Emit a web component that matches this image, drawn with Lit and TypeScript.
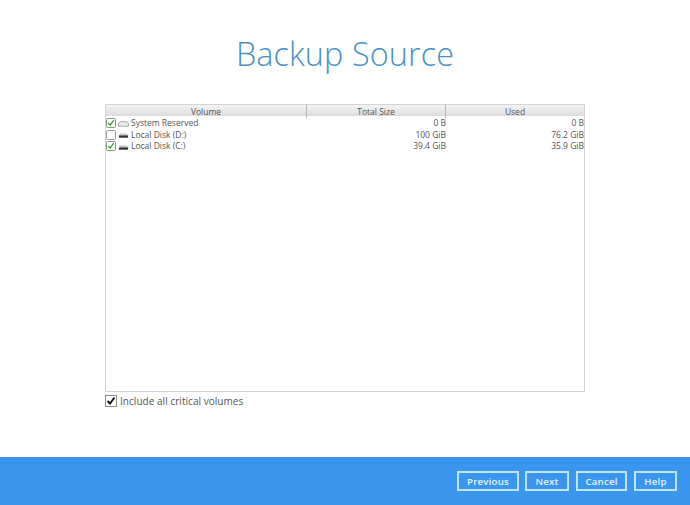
import { LitElement, html, css, svg } from "lit";
import { customElement } from "lit/decorators.js";

const rows = [
  { name: "System Reserved", total: "0 B", used: "0 B", checked: true, light: true },
  { name: "Local Disk (D:)", total: "100 GiB", used: "76.2 GiB", checked: false, light: false },
  { name: "Local Disk (C:)", total: "39.4 GiB", used: "35.9 GiB", checked: true, light: false },
];

@customElement("app-root")
export class AppRoot extends LitElement {
  static styles = css`
    :host { display: flex; flex-direction: column; width: 690px; height: 505px; background: #fff; font-family: "Open Sans", sans-serif; overflow: hidden; }
    .main { flex: 1; display: flex; flex-direction: column; align-items: flex-start; padding-left: 105px; min-height: 0; }
    h1 { align-self: stretch; margin: 34px 0 0 -105px; height: 70px; font-weight: 300; font-size: 32.4px; line-height: 38px; color: #4a91c6; text-align: center; letter-spacing: 0.1px; }
    .table { box-sizing: border-box; width: 480px; height: 288px; border: 1px solid #d4d4d4; }
    .head { display: grid; grid-template-columns: 201px 139px 138px; height: 11px; margin-bottom: 1px; background: linear-gradient(#f4f4f4, #dcdcdc); }
    .head div { font-size: 8.5px; line-height: 13px; color: #555; text-align: center; border-right: 1px solid #b8b8b8; }
    .head div:last-child { border-right: none; }
    .row { display: grid; grid-template-columns: 201px 139px 138px; height: 11.5px; font-size: 8.5px; line-height: 12px; color: #555; }
    .first { display: flex; align-items: center; gap: 1px; }
    .num { text-align: right; }
    .box { width: 8px; height: 8px; margin-right: 1px; border: 1px solid #7f9a7f; border-radius: 1.5px; background: #fff; display: block; flex: none; }
    .box.off { border-color: #9a9a9a; }
    .disk { flex: none; display: block; margin-right: 1px; }
    .include { display: flex; align-items: center; gap: 3px; margin: 2px 0 0 0; font-size: 10px; line-height: 14px; color: #555; letter-spacing: 0.04px; }
    .big { width: 10px; height: 10px; border: 1px solid #8a8a8a; background: #fff; display: block; }
    footer { height: 48px; background: #3a96ec; display: flex; justify-content: flex-end; align-items: center; gap: 7px; padding: 0 13px 0 0; }
    button { height: 20px; box-sizing: border-box; border: 2px solid #bfe3f7; background: transparent; color: #e4f1fb; font: 600 9.7px "Open Sans", sans-serif; padding: 0; letter-spacing: 0.2px; }
    .prev { width: 62px; margin-right: -1px; } .next { width: 44px; } .cancel { width: 51px; } .help { width: 43px; }
  `;

  private check(color: string, w: number) {
    return svg`<path d="M1.5 5 L4 7.5 L8.5 1.5" fill="none" stroke=${color} stroke-width=${w}/>`;
  }

  render() {
    return html`
      <div class="main">
        <h1>Backup Source</h1>
        <div class="table">
          <div class="head"><div>Volume</div><div>Total Size</div><div>Used</div></div>
          ${rows.map(r => html`
            <div class="row">
              <div class="first">
                <svg class="box ${r.checked ? "" : "off"}" viewBox="0 0 10 10">${r.checked ? this.check("#3f9a3f", 1.6) : ""}</svg>
                <svg class="disk" width="11" height="9" viewBox="0 0 12 9">
                  ${r.light
                    ? svg`<path d="M2.5 2.5 H9.5 L11.5 4.5 V7.5 H.5 V4.5 Z" fill="#e8e8e8" stroke="#8f8f8f" stroke-width=".8"/>`
                    : svg`<path d="M2.5 3.5 H9.5 L11 5.5 H1 Z" fill="#c4c4c4"/><rect x="1" y="5.5" width="10" height="2.5" fill="#333"/>`}
                </svg>
                <span>${r.name}</span>
              </div>
              <div class="num">${r.total}</div>
              <div class="num">${r.used}</div>
            </div>`)}
        </div>
        <label class="include">
          <svg class="big" viewBox="0 0 10 10">${this.check("#111", 1.9)}</svg>
          <span>Include all critical volumes</span>
        </label>
      </div>
      <footer>
        <button class="prev">Previous</button>
        <button class="next">Next</button>
        <button class="cancel">Cancel</button>
        <button class="help">Help</button>
      </footer>
    `;
  }
}
